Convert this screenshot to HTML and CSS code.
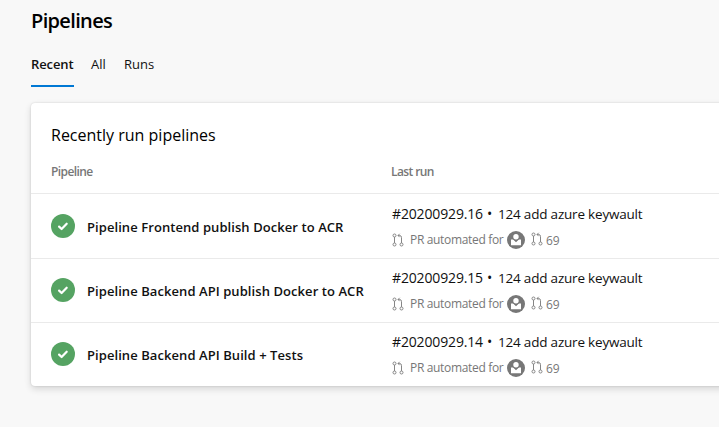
FILE: index.html
```
<!DOCTYPE html>
<html lang="en">
<head>
<meta charset="utf-8">
<title>Pipelines</title>
<link rel="stylesheet" href="styles.css">
</head>
<body>
<svg class="defs" width="0" height="0" aria-hidden="true">
  <symbol id="check" viewBox="0 0 24 24"><circle cx="12" cy="12" r="12" fill="#55a362"/><path d="M8.1 12.6l2.5 2.4 5.1-5.3" fill="none" stroke="#fff" stroke-width="2.2" stroke-linecap="round" stroke-linejoin="round"/></symbol>
  <symbol id="pr" viewBox="0 0 12 14"><g fill="none" stroke="#858585"><circle cx="2.5" cy="2.5" r="1.5"/><circle cx="2.5" cy="11.5" r="1.5"/><circle cx="9.5" cy="11.5" r="1.5"/><path d="M2.5 4v6M9.5 10V4.5Q9.5 2.5 7.5 2.5H6M7.7.8L6 2.5l1.7 1.7"/></g></symbol>
  <symbol id="person" viewBox="0 0 18 18"><circle cx="9" cy="9" r="9" fill="#777"/><path d="M4 8.5h2.2L9 11.3l2.8-2.8H14v5.7H4z" fill="#fff"/><circle cx="9" cy="5.8" r="3.6" fill="#777"/><circle cx="9" cy="5.8" r="2.7" fill="#fff"/></symbol>
</svg>
<main class="page">
  <h1 class="title">Pipelines</h1>
  <nav class="tabs">
    <a class="tab active">Recent</a>
    <a class="tab all">All</a>
    <a class="tab runs">Runs</a>
  </nav>
  <section class="card">
    <h2 class="card-title">Recently run pipelines</h2>
    <div class="head"><span>Pipeline</span><span>Last run</span></div>
    <div class="row">
      <div class="pipeline"><svg class="check"><use href="#check"/></svg><span class="name">Pipeline Frontend publish Docker to ACR</span></div>
      <div class="run"><div class="run-title"><span class="build">#20200929.16 •</span> <span class="message">124 add azure keywault</span></div><div class="meta"><svg class="pr"><use href="#pr"/></svg><span class="reason">PR automated for</span><svg class="person"><use href="#person"/></svg><svg class="pr raised"><use href="#pr"/></svg><span class="number">69</span></div></div>
    </div>
    <div class="row">
      <div class="pipeline"><svg class="check"><use href="#check"/></svg><span class="name">Pipeline Backend API publish Docker to ACR</span></div>
      <div class="run"><div class="run-title"><span class="build">#20200929.15 •</span> <span class="message">124 add azure keywault</span></div><div class="meta"><svg class="pr"><use href="#pr"/></svg><span class="reason">PR automated for</span><svg class="person"><use href="#person"/></svg><svg class="pr raised"><use href="#pr"/></svg><span class="number">69</span></div></div>
    </div>
    <div class="row">
      <div class="pipeline"><svg class="check"><use href="#check"/></svg><span class="name">Pipeline Backend API Build + Tests</span></div>
      <div class="run"><div class="run-title"><span class="build">#20200929.14 •</span> <span class="message">124 add azure keywault</span></div><div class="meta"><svg class="pr"><use href="#pr"/></svg><span class="reason">PR automated for</span><svg class="person"><use href="#person"/></svg><svg class="pr raised"><use href="#pr"/></svg><span class="number">69</span></div></div>
    </div>
  </section>
</main>
</body>
</html>
```
FILE: styles.css
```
* { box-sizing: border-box; }
body { margin: 0; height: 427px; overflow: hidden; background: #f8f8f8; color: #111; font-family: "Open Sans", "Noto Sans", sans-serif; font-size: 13px; white-space: nowrap; }
.defs { display: block; }
.page { padding: 7px 0 0 31px; }
.title { margin: 0; font-size: 20px; line-height: 28px; font-weight: 600; letter-spacing: -0.65px; color: #000; }
.tabs { display: flex; gap: 17px; height: 52px; padding-top: 17px; }
.tab { height: 35px; line-height: 25px; }
.active { width: 43px; font-weight: 600; letter-spacing: -0.1px; border-bottom: 2px solid #0078d4; }
.all { width: 16px; }
.card { margin-top: 16px; height: 283px; width: 720px; background: #fff; border-radius: 4px; box-shadow: 0 3px 7px rgba(0,0,0,.14), 0 0 2px rgba(0,0,0,.15); }
.card-title { margin: 0; padding: 20px 20px 0; font-size: 16px; line-height: 24px; font-weight: 400; letter-spacing: 0; color: #000; }
.head { display: grid; grid-template-columns: 340px 1fr; height: 46px; padding: 15px 20px 0; font-size: 12px; line-height: 20px; font-weight: 600; letter-spacing: -0.6px; color: #777; }
.row { display: grid; grid-template-columns: 341px 1fr; height: 64px; padding: 0 20px; border-top: 1px solid #eaeaea; }
.head + .row { height: 65px; padding-top: 1px; }
.pipeline { display: flex; gap: 12px; padding-top: 19px; }
.check { width: 24px; height: 24px; }
.name { line-height: 26px; font-weight: 600; letter-spacing: 0.07px; }
.run { padding-top: 9px; }
.run-title { display: flex; font-size: 14px; line-height: 20px; }
.build { width: 106px; letter-spacing: -0.15px; word-spacing: 0.5px; }
.message { font-size: 13.5px; letter-spacing: -0.2px; }
.meta { display: flex; align-items: center; height: 18px; margin-top: 7px; font-size: 12px; line-height: 18px; color: #777; }
.pr { width: 12px; height: 14px; }
.reason { width: 93px; margin: 0 4px 0 6px; letter-spacing: -0.33px; }
.person { width: 18px; height: 18px; margin-right: 6px; }
.raised { margin-top: -2px; }
.number { margin: 2px 0 0 3px; }
```
